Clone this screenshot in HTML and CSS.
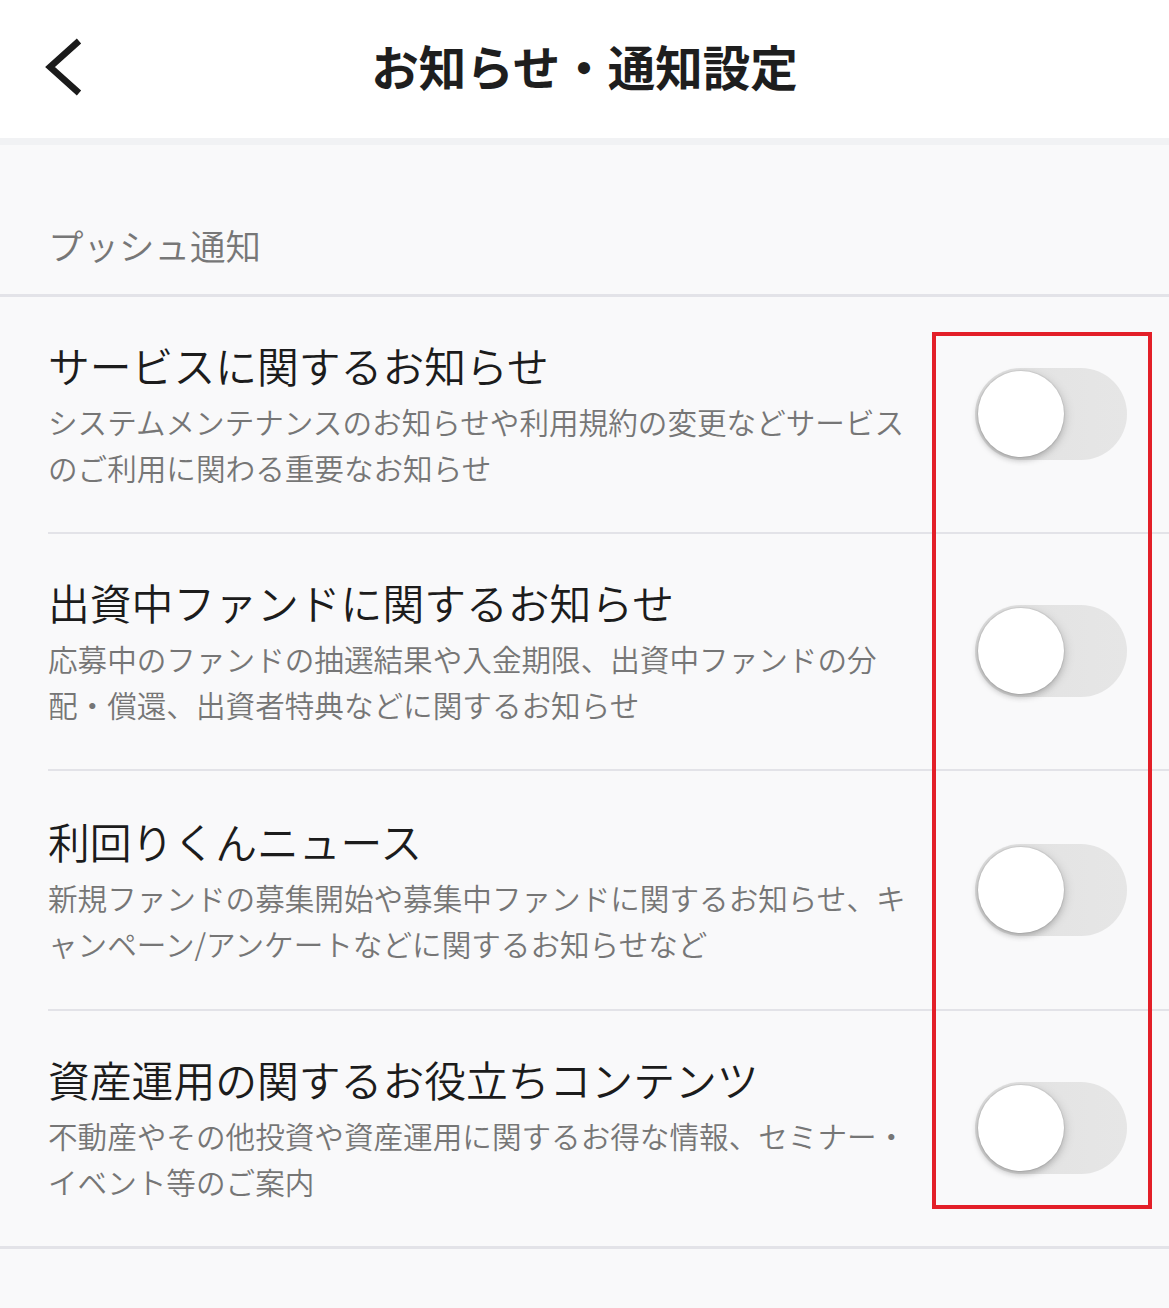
FILE: index.html
```html
<!DOCTYPE html>
<html lang="ja">
<head>
<meta charset="utf-8">
<title>お知らせ・通知設定</title>
<link rel="stylesheet" href="styles.css">
</head>
<body>
<header class="header">
  <div class="back">
    <svg class="back-icon" width="50" height="62" viewBox="0 0 50 62" aria-hidden="true">
      <polyline points="39,5 10,31 39,57" fill="none" stroke="#1b1b1b" stroke-width="6.5" stroke-linejoin="miter"/>
    </svg>
  </div>
  <h1 class="title">お知らせ・通知設定</h1>
  <div class="spacer"></div>
</header>
<div class="band"></div>
<main class="content">
  <div class="section-label">プッシュ通知</div>
  <div class="list">
    <div class="row">
      <div class="text">
        <div class="row-title">サービスに関するお知らせ</div>
        <div class="row-desc">システムメンテナンスのお知らせや利用規約の変更などサービス<br>のご利用に関わる重要なお知らせ</div>
      </div>
      <div class="toggle"><div class="knob"></div></div>
    </div>
    <div class="row">
      <div class="text">
        <div class="row-title">出資中ファンドに関するお知らせ</div>
        <div class="row-desc">応募中のファンドの抽選結果や入金期限、出資中ファンドの分<br>配・償還、出資者特典などに関するお知らせ</div>
      </div>
      <div class="toggle"><div class="knob"></div></div>
    </div>
    <div class="row row-tall">
      <div class="text">
        <div class="row-title">利回りくんニュース</div>
        <div class="row-desc">新規ファンドの募集開始や募集中ファンドに関するお知らせ、キ<br>ャンペーン/アンケートなどに関するお知らせなど</div>
      </div>
      <div class="toggle"><div class="knob"></div></div>
    </div>
    <div class="row row-last">
      <div class="text">
        <div class="row-title">資産運用の関するお役立ちコンテンツ</div>
        <div class="row-desc">不動産やその他投資や資産運用に関するお得な情報、セミナー・<br>イベント等のご案内</div>
      </div>
      <div class="toggle"><div class="knob"></div></div>
    </div>
  </div>
  <div class="highlight"></div>
</main>
</body>
</html>
```

FILE: styles.css
```css
* {
  box-sizing: border-box;
}

html, body {
  margin: 0;
  padding: 0;
}

body {
  background: #f9f9fa;
  font-family: "Noto Sans CJK JP", "Noto Sans", sans-serif;
  color: #222;
  width: 1169px;
  min-height: 1308px;
}

.header {
  height: 138px;
  background: #ffffff;
  display: grid;
  grid-template-columns: 1fr auto 1fr;
  align-items: center;
}

.back {
  padding-left: 40px;
  display: flex;
  align-items: center;
}

.back-icon {
  display: block;
  margin-top: -4px;
}

.title {
  margin: 0;
  font-size: 47.5px;
  font-weight: 700;
  color: #1e1e1e;
  line-height: 1;
  margin-top: -6px;
}

.band {
  height: 7px;
  background: #f1f2f4;
}

.content {
  position: relative;
}

.section-label {
  padding: 75px 0 24px 48px;
  font-size: 35.5px;
  line-height: 50px;
  font-weight: 350;
  color: #777777;
  border-bottom: 3px solid #e3e3e8;
}

.list {
  border-bottom: 3px solid #e3e3e8;
}

.row {
  margin-left: 48px;
  padding: 40px 42px 41px 0;
  display: flex;
  align-items: center;
  border-bottom: 2px solid #e3e3e8;
}

.row-tall {
  padding-top: 42px;
  padding-bottom: 42px;
}

.row-last {
  border-bottom: none;
}

.text {
  flex: 1;
  min-width: 0;
}

.row-title {
  font-size: 41.8px;
  line-height: 56px;
  font-weight: 350;
  color: #1c1c1c;
  white-space: nowrap;
}

.row-desc {
  margin-top: 6px;
  font-size: 29.6px;
  line-height: 46px;
  font-weight: 350;
  color: #767676;
  white-space: nowrap;
}

.toggle {
  flex: none;
  width: 152px;
  height: 92px;
  border-radius: 46px;
  background: linear-gradient(to right, #dedede 0%, #e4e4e4 55%, #e6e6e6 100%);
  padding: 3px;
  display: flex;
  align-items: center;
}

.knob {
  width: 86px;
  height: 86px;
  border-radius: 50%;
  background: #ffffff;
  box-shadow: 0 0 0 1px rgba(0, 0, 0, 0.05), -1px 3px 6px rgba(0, 0, 0, 0.22), 4px 2px 10px rgba(0, 0, 0, 0.08);
}

.highlight {
  position: absolute;
  left: 932px;
  top: 187px;
  width: 220px;
  height: 877px;
  border: 4px solid #e31f28;
  pointer-events: none;
}
```
